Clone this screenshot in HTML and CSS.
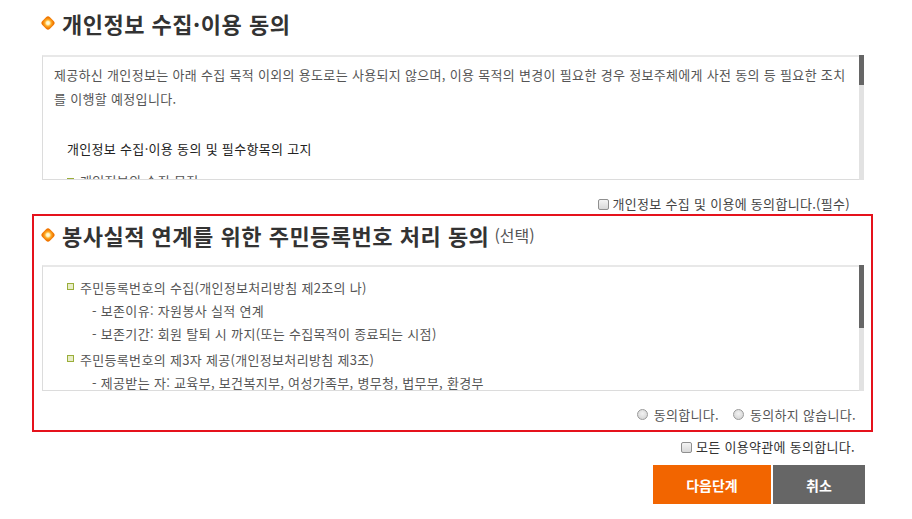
FILE: index.html
```
<!DOCTYPE html>
<html lang="ko">
<head>
<meta charset="utf-8">
<title>약관 동의</title>
<link rel="stylesheet" href="styles.css">
</head>
<body>
<div class="wrap">
  <section class="sec">
    <h2 class="title"><svg class="dia" width="16" height="16" viewBox="0 0 16 16"><defs><radialGradient id="g1" cx="50%" cy="50%" r="50%"><stop offset="0" stop-color="#fffdf2"/><stop offset="0.32" stop-color="#fff2b8"/><stop offset="0.58" stop-color="#ffad28"/><stop offset="1" stop-color="#f07600"/></radialGradient></defs><rect x="2.6" y="2.6" width="10.8" height="10.8" rx="2.8" transform="rotate(45 8 8)" fill="url(#g1)"/></svg>개인정보 수집·이용 동의</h2>
    <div class="boxrow box1">
      <div class="box">
        <p class="para">제공하신 개인정보는 아래 수집 목적 이외의 용도로는 사용되지 않으며, 이용 목적의 변경이 필요한 경우 정보주체에게 사전 동의 등 필요한 조치를 이행할 예정입니다.</p>
        <p class="subh">개인정보 수집·이용 동의 및 필수항목의 고지</p>
        <ul class="list">
          <li>개인정보의 수집 목적</li>
        </ul>
      </div>
      <div class="sbar"><div class="thumb t1"></div></div>
    </div>
    <div class="agree"><span class="cb"></span>개인정보 수집 및 이용에 동의합니다.(필수)</div>
  </section>

  <section class="sec red">
    <h2 class="title t2"><svg class="dia" width="16" height="16" viewBox="0 0 16 16"><defs><radialGradient id="g2" cx="50%" cy="50%" r="50%"><stop offset="0" stop-color="#fffdf2"/><stop offset="0.32" stop-color="#fff2b8"/><stop offset="0.58" stop-color="#ffad28"/><stop offset="1" stop-color="#f07600"/></radialGradient></defs><rect x="2.6" y="2.6" width="10.8" height="10.8" rx="2.8" transform="rotate(45 8 8)" fill="url(#g2)"/></svg><span>봉사실적 연계를 위한 주민등록번호 처리 동의</span><small>(선택)</small></h2>
    <div class="boxrow box2">
      <div class="box">
        <ul class="list list2">
          <li>주민등록번호의 수집(개인정보처리방침 제2조의 나)
            <div class="sub">- 보존이유: 자원봉사 실적 연계</div>
            <div class="sub">- 보존기간: 회원 탈퇴 시 까지(또는 수집목적이 종료되는 시점)</div>
          </li>
          <li>주민등록번호의 제3자 제공(개인정보처리방침 제3조)
            <div class="sub">- 제공받는 자: 교육부, 보건복지부, 여성가족부, 병무청, 법무부, 환경부</div>
          </li>
        </ul>
      </div>
      <div class="sbar"><div class="thumb t2b"></div></div>
    </div>
    <div class="radios">
      <label class="ropt"><span class="rd"></span>동의합니다.</label>
      <label class="ropt"><span class="rd"></span>동의하지 않습니다.</label>
    </div>
  </section>

  <div class="agree all"><span class="cb"></span>모든 이용약관에 동의합니다.</div>
  <div class="btns">
    <button class="btn next">다음단계</button>
    <button class="btn cancel">취소</button>
  </div>
</div>
</body>
</html>
```
FILE: styles.css
```
* { box-sizing: border-box; }
body {
  margin: 0;
  background: #fff;
  font-family: "Noto Sans CJK KR", "Noto Sans", sans-serif;
  color: #555;
}
.wrap {
  margin-left: 32px;
  width: 841px;
}
.sec {
  padding: 0 9px 0 10px;
}
.title {
  margin: 0;
  height: 46px;
  line-height: 46px;
  font-size: 22px;
  font-weight: 700;
  color: #333;
  letter-spacing: 0.5px;
  display: flex;
  align-items: center;
}
.dia {
  margin: 0 6px 0 -2px;
  flex: none;
}
.title small {
  font-size: 16px;
  font-weight: 400;
  color: #555;
  margin-left: 5px;
  letter-spacing: 0;
}
.boxrow {
  display: flex;
  height: 125px;
  margin-top: 9px;
}
.box {
  flex: 1;
  border: 1px solid #dcdcdc;
  border-top: 2px solid #e8e8e8;
  border-right: none;
  overflow: hidden;
  font-size: 13px;
  letter-spacing: 0.32px;
}
.sbar {
  width: 5px;
  background: #e2e2e2;
  flex: none;
}
.thumb { background: #666; }
.t1 { height: 30px; }
.t2b { height: 63px; }
.para {
  margin: 0;
  padding: 6px 12px 0 11px;
  line-height: 24px;
  color: #555;
}
.subh {
  margin: 26px 0 0 24px;
  line-height: 24px;
  color: #222;
}
.list {
  list-style: none;
  margin: 8px 0 0;
  padding: 0 0 0 24px;
}
.list li {
  position: relative;
  padding-left: 13px;
  line-height: 24px;
  color: #555;
}
.list li::before {
  content: "";
  position: absolute;
  left: 0;
  top: 9px;
  width: 5px;
  height: 5px;
  border: 1px solid #9aae3a;
  background: #e8edc8;
}
.list2 {
  margin-top: 9px;
}
.list2 li {
  line-height: 23px;
}
.list2 li + li { margin-top: 3px; }
.list2 li::before { top: 7px; }
.sub {
  padding-left: 12px;
}
.agree {
  display: flex;
  justify-content: flex-end;
  align-items: center;
  height: 20px;
  line-height: 20px;
  margin-top: 14px;
  padding-right: 14px;
  font-size: 13px;
  color: #444;
  letter-spacing: 0.3px;
}
.cb {
  width: 11px;
  height: 11px;
  border: 1px solid #8f8f8f;
  border-radius: 2px;
  background: linear-gradient(#f4f4f4, #d8d8d8);
  margin-right: 4px;
  flex: none;
}
.red {
  border: 2px solid #e5121c;
  padding: 0 7px 0 8px;
  height: 218px;
}
.t2 {
  height: 38px;
  line-height: 38px;
}
.box2 {
  margin-top: 11px;
  height: 126px;
}
.radios {
  display: flex;
  justify-content: flex-end;
  align-items: center;
  height: 20px;
  margin-top: 13px;
  padding-right: 8px;
  font-size: 13px;
  color: #555;
  letter-spacing: 0.3px;
}
.ropt {
  display: flex;
  align-items: center;
}
.ropt + .ropt { margin-left: 14px; }
.rd {
  width: 11px;
  height: 11px;
  border: 1px solid #9a9a9a;
  border-radius: 50%;
  background: radial-gradient(circle at 50% 40%, #f2f2f2, #cfcfcf);
  margin-right: 6px;
}
.all {
  margin-top: 5px;
  padding-right: 18px;
  color: #333;
}
.btns {
  display: flex;
  justify-content: flex-end;
  gap: 2px;
  margin-top: 8px;
  padding-right: 8px;
}
.btn {
  height: 39px;
  border: none;
  color: #fff;
  font-family: "Noto Sans CJK KR", "Noto Sans", sans-serif;
  font-size: 14px;
  font-weight: 700;
  letter-spacing: 0;
}
.next { width: 118px; background: #f26500; }
.cancel { width: 92px; background: #666; }
```
